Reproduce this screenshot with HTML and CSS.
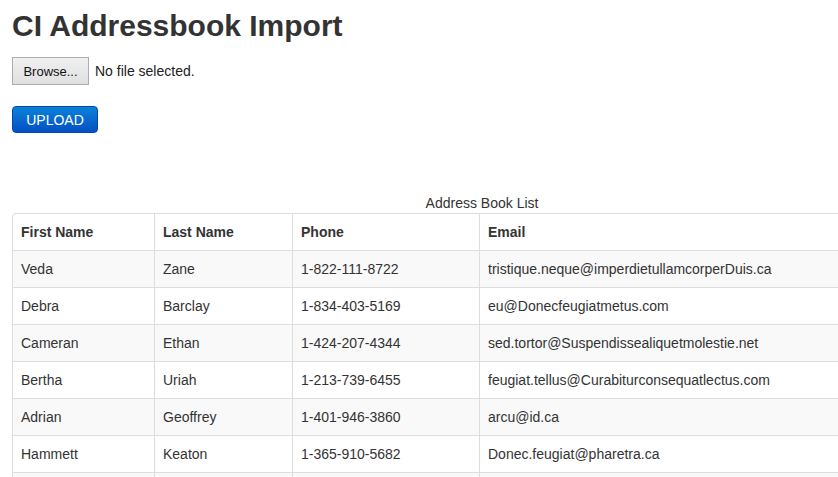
FILE: index.html
```html
<!DOCTYPE html>
<html>
<head>
<meta charset="utf-8">
<title>CI Addressbook Import</title>
<link rel="stylesheet" href="styles.css">
</head>
<body>
<h1 class="title">CI Addressbook Import</h1>
<form class="upload-form">
  <div class="file-row">
    <button type="button" class="browse">Browse...</button>
    <span class="file-name">No file selected.</span>
  </div>
  <button type="button" class="upload">UPLOAD</button>
</form>
<table class="book">
  <caption>Address Book List</caption>
  <colgroup>
    <col class="c1"><col class="c2"><col class="c3"><col class="c4">
  </colgroup>
  <thead>
    <tr><th>First Name</th><th>Last Name</th><th>Phone</th><th>Email</th></tr>
  </thead>
  <tbody>
    <tr><td>Veda</td><td>Zane</td><td>1-822-111-8722</td><td>tristique.neque@imperdietullamcorperDuis.ca</td></tr>
    <tr><td>Debra</td><td>Barclay</td><td>1-834-403-5169</td><td>eu@Donecfeugiatmetus.com</td></tr>
    <tr><td>Cameran</td><td>Ethan</td><td>1-424-207-4344</td><td>sed.tortor@Suspendissealiquetmolestie.net</td></tr>
    <tr><td>Bertha</td><td>Uriah</td><td>1-213-739-6455</td><td>feugiat.tellus@Curabiturconsequatlectus.com</td></tr>
    <tr><td>Adrian</td><td>Geoffrey</td><td>1-401-946-3860</td><td>arcu@id.ca</td></tr>
    <tr><td>Hammett</td><td>Keaton</td><td>1-365-910-5682</td><td>Donec.feugiat@pharetra.ca</td></tr>
    <tr class="empty"><td></td><td></td><td></td><td></td></tr>
  </tbody>
</table>
</body>
</html>
```

FILE: styles.css
```css
html {
  overflow: hidden;
}
body {
  margin: 0;
  padding: 8px 12px;
  font-family: "Liberation Sans", Arial, Helvetica, sans-serif;
  font-size: 14px;
  line-height: 20px;
  color: #333333;
  background: #ffffff;
}
.title {
  margin: 0;
  font-size: 30px;
  line-height: 36px;
  font-weight: bold;
  color: #333333;
}
.upload-form {
  margin: 13px 0 0;
}
.file-row {
  display: flex;
  align-items: center;
  gap: 6px;
  height: 28px;
}
.browse {
  box-sizing: border-box;
  width: 77px;
  height: 28px;
  padding: 0;
  font-family: "Liberation Sans", Arial, sans-serif;
  font-size: 13px;
  color: #111111;
  background: linear-gradient(#f0f0f0, #e0e0e0);
  border: 1px solid #acacac;
  border-radius: 0;
}
.file-name {
  font-size: 14px;
  color: #222222;
}
.upload {
  display: block;
  box-sizing: border-box;
  margin-top: 21px;
  width: 86px;
  height: 27px;
  padding: 0;
  font-family: "Liberation Sans", Arial, sans-serif;
  font-size: 14px;
  color: #ffffff;
  background: linear-gradient(#0a82d8, #0350c4);
  border: 1px solid #0346b0;
  border-radius: 4px;
}
.book {
  margin-top: 60px;
  width: 940px;
  table-layout: fixed;
  border-collapse: separate;
  border-spacing: 0;
  border: 1px solid #dddddd;
  border-left: 0;
  border-radius: 4px;
}
.book caption {
  line-height: 20px;
  text-align: center;
  color: #333333;
}
.c1 { width: 142px; }
.c2 { width: 138px; }
.c3 { width: 187px; }
.c4 { width: 472px; }
.book th,
.book td {
  padding: 8px;
  line-height: 20px;
  text-align: left;
  vertical-align: top;
  border-left: 1px solid #dddddd;
  border-top: 1px solid #dddddd;
  white-space: nowrap;
  overflow: hidden;
}
.book tr.empty td {
  height: 20px;
}
.book thead th {
  border-top: 0;
  font-weight: bold;
}
.book thead th:first-child {
  border-top-left-radius: 4px;
}
.book tbody tr:nth-child(odd) td {
  background: #f9f9f9;
}
```
